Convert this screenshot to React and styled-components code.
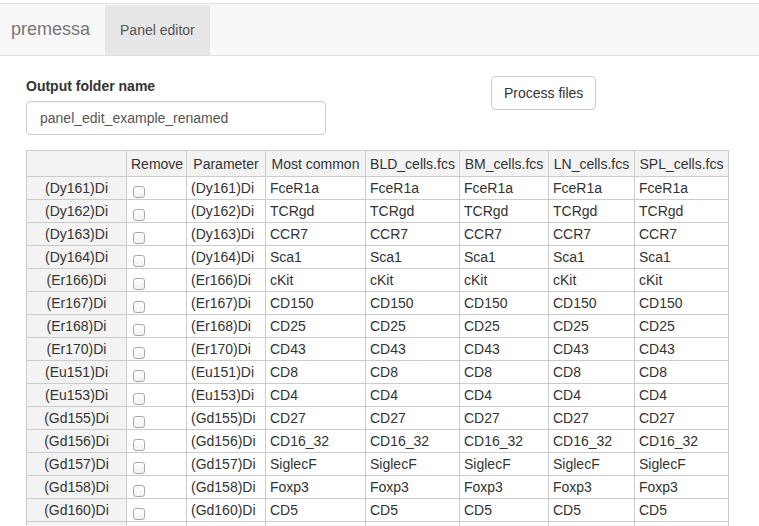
import React from 'react';
import styled, { createGlobalStyle } from 'styled-components';

const Global = createGlobalStyle`
  html, body {
    margin: 0;
    padding: 0;
    background: #fff;
    overflow: hidden;
  }
  body {
    font-family: "Liberation Sans", Arial, sans-serif;
    font-size: 14px;
    color: #333;
  }
`;

const Page = styled.div`
  padding-top: 3px;
`;

const Navbar = styled.nav`
  display: flex;
  align-items: stretch;
  height: 51px;
  background: #f8f8f8;
  border-top: 1px solid #dde2e5;
  border-bottom: 1px solid #e3e3e3;
`;

const Brand = styled.div`
  display: flex;
  align-items: center;
  padding: 0 15px 0 11px;
  font-size: 18px;
  color: #777;
`;

const Tab = styled.div`
  display: flex;
  align-items: center;
  padding: 0 15px;
  margin-top: 1px;
  background: ${p => (p.active ? '#e7e7e7' : 'transparent')};
  color: #555;
  font-size: 14px;
`;

const Content = styled.div`
  padding: 20px 0 0 26px;
`;

const TopRow = styled.div`
  display: grid;
  grid-template-columns: 465px auto;
  align-items: start;
`;

const FormGroup = styled.div`
  display: flex;
  flex-direction: column;
  margin-bottom: 15px;
`;

const Label = styled.label`
  font-weight: bold;
  line-height: 20px;
  margin-bottom: 5px;
`;

const Input = styled.input`
  box-sizing: border-box;
  width: 300px;
  height: 34px;
  padding: 6px 13px;
  border: 1px solid #ccc;
  border-radius: 4px;
  font-family: inherit;
  font-size: 14px;
  color: #555;
  box-shadow: inset 0 1px 1px rgba(0, 0, 0, 0.075);
  outline: none;
`;

const Button = styled.button`
  justify-self: start;
  box-sizing: border-box;
  height: 34px;
  padding: 6px 12px;
  background: #fff;
  border: 1px solid #ccc;
  border-radius: 4px;
  font-family: inherit;
  font-size: 14px;
  color: #333;
`;

const Table = styled.table`
  border-collapse: collapse;
  table-layout: fixed;
  width: 702px;
  font-size: 14px;
  color: #333;
`;

const Th = styled.th`
  height: 25px;
  padding: 0 4px;
  border: 1px solid #ccc;
  background: #f3f3f3;
  font-weight: normal;
  text-align: center;
  white-space: nowrap;
  overflow: hidden;
`;

const RowHead = styled(Th)`
  height: 22px;
`;

const Td = styled.td`
  height: 22px;
  padding: 0 4px;
  border: 1px solid #ccc;
  white-space: nowrap;
  overflow: hidden;
`;

const Check = styled.span`
  display: inline-block;
  box-sizing: border-box;
  width: 12px;
  height: 12px;
  margin: 7px 0 0 2px;
  border: 1px solid #a9a9a9;
  border-radius: 3px;
  background: linear-gradient(#fff, #f2f2f2);
  vertical-align: top;
`;

const widths = [100, 60, 79, 100, 94, 89, 86, 94];
const headers = ['', 'Remove', 'Parameter', 'Most common', 'BLD_cells.fcs', 'BM_cells.fcs', 'LN_cells.fcs', 'SPL_cells.fcs'];

const rows = [
  ['(Dy161)Di', 'FceR1a'],
  ['(Dy162)Di', 'TCRgd'],
  ['(Dy163)Di', 'CCR7'],
  ['(Dy164)Di', 'Sca1'],
  ['(Er166)Di', 'cKit'],
  ['(Er167)Di', 'CD150'],
  ['(Er168)Di', 'CD25'],
  ['(Er170)Di', 'CD43'],
  ['(Eu151)Di', 'CD8'],
  ['(Eu153)Di', 'CD4'],
  ['(Gd155)Di', 'CD27'],
  ['(Gd156)Di', 'CD16_32'],
  ['(Gd157)Di', 'SiglecF'],
  ['(Gd158)Di', 'Foxp3'],
  ['(Gd160)Di', 'CD5'],
];

export default function App() {
  return (
    <Page>
      <Global />
      <Navbar>
        <Brand>premessa</Brand>
        <Tab active>Panel editor</Tab>
      </Navbar>
      <Content>
        <TopRow>
          <FormGroup>
            <Label>Output folder name</Label>
            <Input defaultValue="panel_edit_example_renamed" />
          </FormGroup>
          <Button>Process files</Button>
        </TopRow>
        <Table>
          <colgroup>
            {widths.map((w, i) => <col key={i} style={{ width: w }} />)}
          </colgroup>
          <thead>
            <tr>
              {headers.map((h, i) => <Th key={i}>{h}</Th>)}
            </tr>
          </thead>
          <tbody>
            {rows.map(([param, marker]) => (
              <tr key={param}>
                <RowHead>{param}</RowHead>
                <Td><Check /></Td>
                <Td>{param}</Td>
                <Td>{marker}</Td>
                <Td>{marker}</Td>
                <Td>{marker}</Td>
                <Td>{marker}</Td>
                <Td>{marker}</Td>
              </tr>
            ))}
            <tr>
              <RowHead />
              {widths.slice(1).map((w, i) => <Td key={i} />)}
            </tr>
          </tbody>
        </Table>
      </Content>
    </Page>
  );
}
